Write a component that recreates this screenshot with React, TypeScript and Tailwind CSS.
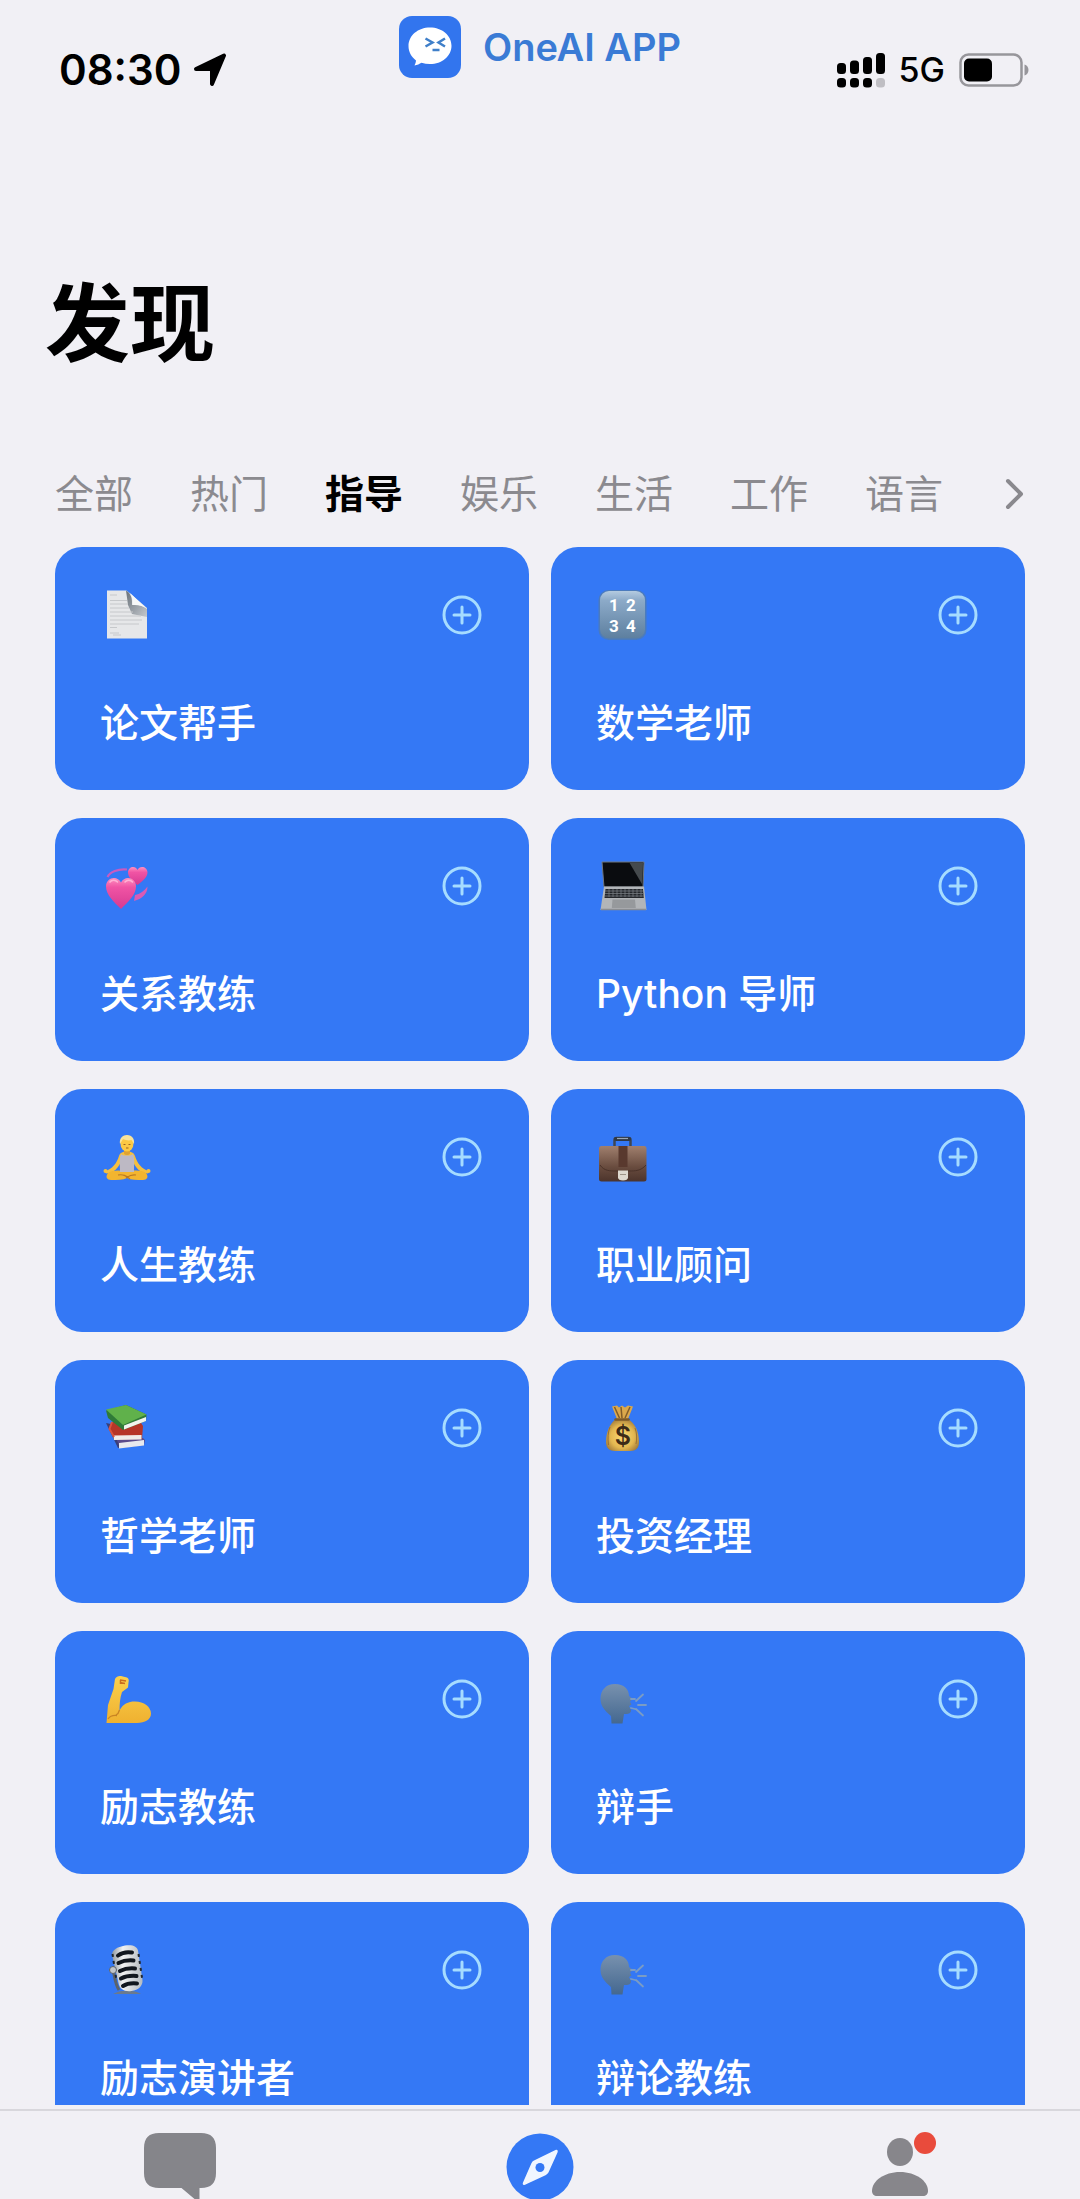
import type { ReactNode } from 'react';

interface Assistant {
    name: string;
    icon: ReactNode;
}

const categories = ['全部', '热门', '指导', '娱乐', '生活', '工作', '语言'];
const activeCategory = '指导';

const assistants: Assistant[] = [
    { name: '论文帮手', icon: <PageIcon /> },
    { name: '数学老师', icon: <NumbersIcon /> },
    { name: '关系教练', icon: <HeartsIcon /> },
    { name: 'Python 导师', icon: <LaptopIcon /> },
    { name: '人生教练', icon: <MeditationIcon /> },
    { name: '职业顾问', icon: <BriefcaseIcon /> },
    { name: '哲学老师', icon: <BooksIcon /> },
    { name: '投资经理', icon: <MoneyBagIcon /> },
    { name: '励志教练', icon: <BicepsIcon /> },
    { name: '辩手', icon: <SpeakingIcon id="debater" /> },
    { name: '励志演讲者', icon: <MicrophoneIcon /> },
    { name: '辩论教练', icon: <SpeakingIcon id="debateCoach" /> },
];

export default function App() {
    return (
        <div className="flex h-screen flex-col bg-[#f1f0f5] font-['Inter','Noto_Sans_CJK_SC',sans-serif] text-black">
            <StatusBar />

            <h1 className="mt-[175px] px-[45px] text-[85px] leading-[120px] font-bold">发现</h1>

            {/* Category tabs */}
            <nav className="mt-[81px] flex h-14 items-center justify-between pr-[56px] pl-[55px]">
                <div className="flex gap-[57px]">
                    {categories.map((category) => (
                        <button
                            key={category}
                            className={
                                category === activeCategory
                                    ? 'text-[39px] leading-14 font-bold text-black'
                                    : 'text-[39px] leading-14 font-normal text-[#8b8a8f]'
                            }
                        >
                            {category}
                        </button>
                    ))}
                </div>
                <button aria-label="更多分类">
                    <svg width="20" height="32" viewBox="0 0 20 32" fill="none" stroke="#8a898e" strokeWidth="4" strokeLinecap="round" strokeLinejoin="round">
                        <path d="M4 3 17 16 4 29" />
                    </svg>
                </button>
            </nav>

            {/* Assistant cards */}
            <main className="mt-[25px] mb-1 min-h-0 flex-1 overflow-y-auto px-[55px] [scrollbar-width:none]">
                <div className="grid grid-cols-2 gap-x-[22px] gap-y-7">
                    {assistants.map((assistant) => (
                        <AssistantCard key={assistant.name} assistant={assistant} />
                    ))}
                </div>
            </main>

            <TabBar />
        </div>
    );
}

function StatusBar() {
    return (
        <header className="grid grid-cols-[1fr_auto_1fr] px-[51px] pt-4">
            <div className="flex items-center gap-3 self-end pl-2">
                <span className="text-[42px] leading-10 font-semibold">08:30</span>
                <svg width="34" height="34" viewBox="0 0 34 34">
                    <path d="M31 2.500 19 31V16H3Z" fill="#000" stroke="#000" strokeWidth="4" strokeLinejoin="round" />
                </svg>
            </div>

            <div className="mb-3 flex items-center gap-[22px]">
                <svg width="62" height="62" viewBox="0 0 62 62">
                    <rect width="62" height="62" rx="13" fill="#3275ee" />
                    <path d="M31 11.500C19 11.500 9.500 19.500 9.500 30c0 6 3 11 7.500 14.500-.2 2-.8 3.500-1.500 5 2.800-.4 5-1.500 7-2.700 2.700.8 5.500 1.200 8.500 1.200 12 0 21.500-8 21.500-18.300S43 11.500 31 11.500Z" fill="#fff" />
                    <path d="m26.500 22.500 7 4-7 4M46 22.500l-6.500 4 6.500 4M33.500 34h7" fill="none" stroke="#3f7fc9" strokeWidth="2.500" />
                </svg>
                <span className="text-[38px] leading-none font-semibold text-[#3a7bd5]">OneAI APP</span>
            </div>

            <div className="flex items-center justify-end gap-[14px] self-end">
                <svg width="48" height="35" viewBox="0 0 48 35">
                    <rect x="0" y="10" width="9" height="11" rx="3.500" />
                    <rect x="13" y="7.500" width="9" height="13.500" rx="3.500" />
                    <rect x="26" y="4" width="9" height="17" rx="3.500" />
                    <rect x="39" y="0" width="9" height="21" rx="3.500" />
                    <rect x="0" y="25" width="9" height="9.500" rx="3.500" />
                    <rect x="13" y="25" width="9" height="9.500" rx="3.500" />
                    <rect x="26" y="25" width="9" height="9.500" rx="3.500" />
                    <rect x="39" y="25" width="9" height="9.500" rx="3.500" fill="#bfbec3" />
                </svg>
                <span className="text-[34px] leading-10 font-medium">5G</span>
                <svg width="70" height="34" viewBox="0 0 70 34">
                    <rect x="1.500" y="1.500" width="61" height="31" rx="8" fill="none" stroke="#97969b" strokeWidth="2.500" />
                    <rect x="5" y="5.500" width="28" height="23" rx="5" />
                    <path d="M65.500 11.500c2.500.5 4 3 4 5.500s-1.500 5-4 5.500Z" fill="#97969b" />
                </svg>
            </div>
        </header>
    );
}

function AssistantCard({ assistant }: { assistant: Assistant }) {
    return (
        <article className="flex h-[243px] flex-col justify-between rounded-[27px] bg-[#3478f5] pt-[42px] pr-[47px] pb-[39px] pl-[45px]">
            <div className="flex items-center justify-between">
                {assistant.icon}
                <button aria-label={`添加${assistant.name}`}>
                    <svg width="40" height="40" viewBox="0 0 40 40" fill="none" stroke="#a6dcff" strokeWidth="3" strokeLinecap="round">
                        <circle cx="20" cy="20" r="18" />
                        <path d="M20 12v16M12 20h16" />
                    </svg>
                </button>
            </div>
            <h2 className="text-[39px] leading-14 font-medium text-white">{assistant.name}</h2>
        </article>
    );
}

function TabBar() {
    return (
        <nav className="grid h-[90px] shrink-0 grid-cols-3 items-start justify-items-center overflow-hidden border-t-2 border-[#d8d7dc] pt-[22px]">
            <button aria-label="聊天">
                <svg width="72" height="72" viewBox="0 0 72 72" fill="#85858a">
                    <path d="M15 0h42c10 0 15 5 15 15v25c0 10-5 15-15 15h-1.500v12.500c0 1.500-1.200 1.800-2.200.8L37.500 55H15C5 55 0 50 0 40V15C0 5 5 0 15 0Z" />
                </svg>
            </button>
            <button aria-label="发现">
                <svg width="68" height="68" viewBox="0 0 68 68">
                    <circle cx="34" cy="34" r="33.500" fill="#3478f5" />
                    <path d="M49.500 17 28 27.500c-1.200.6-2 1.500-2.600 2.700L17 49.500c-.8 2 .3 3 2 2.200l20.500-9.500c1.500-.8 2.500-1.800 3.200-3.200l8.800-19.500c.8-2-.3-3.300-2-2.500Z" fill="#f0f6ff" />
                    <circle cx="34" cy="34.500" r="4.500" fill="#3478f5" />
                </svg>
            </button>
            <button aria-label="我的" className="relative">
                <svg width="56" height="64" viewBox="0 0 56 64" fill="#87868b">
                    <ellipse cx="28" cy="19" rx="13" ry="14" />
                    <path d="M0 58c0-10 12-19 28-19s28 9 28 19c0 3-2 5-5 5H5c-3 0-5-2-5-5Z" />
                </svg>
                <span className="absolute -top-px -right-2 size-[22px] rounded-full bg-[#e94b3c]" />
            </button>
        </nav>
    );
}

function Pictogram({ children }: { children: ReactNode }) {
    return (
        <svg width="52" height="52" viewBox="0 0 52 52" aria-hidden="true">
            {children}
        </svg>
    );
}

function PageIcon() {
    return (
        <Pictogram>
            <defs>
                <linearGradient id="pageFold" x1="0" y1="0" x2="1" y2="1">
                    <stop offset="0" stopColor="#3f4a55" />
                    <stop offset="1" stopColor="#b9bec4" />
                </linearGradient>
            </defs>
            <path d="M7 1.500h19.500L47 19v30.500H7Z" fill="#e6e7e9" />
            <path d="M26 1.500c5 3 6.500 8 6 14.500 5-.8 11 .5 15 4v8L32 25l-4-9Z" fill="url(#pageFold)" opacity=".75" />
            <path d="M28 2c4 3.500 5 8 4.500 14 5-.5 10 .5 14 3.500Z" fill="#f7f8f9" />
            <path d="M10 6h7M10 11.500h17M10 15h18M10 19h19M10 23h23M10 27h31M10 31h32M10 35h29M10 38.500h7M10 44h9M13 46h8" stroke="#c6c8cb" strokeWidth="1" />
        </Pictogram>
    );
}

function NumbersIcon() {
    return (
        <Pictogram>
            <defs>
                <linearGradient id="numbers" x1="0" y1="0" x2="0" y2="1">
                    <stop offset="0" stopColor="#b4cbe0" />
                    <stop offset=".2" stopColor="#8caac8" />
                    <stop offset="1" stopColor="#5d7f9f" />
                </linearGradient>
            </defs>
            <rect x="2.500" y="1" width="48" height="50" rx="10" fill="#4b7bbd" />
            <rect x="4" y="2" width="45" height="47.500" rx="9" fill="url(#numbers)" />
            <g className="font-['Roboto',sans-serif] text-[17px] font-bold" fill="#fff" textAnchor="middle">
                <text x="18" y="22">1</text>
                <text x="35" y="22">2</text>
                <text x="18" y="43">3</text>
                <text x="35" y="43">4</text>
            </g>
        </Pictogram>
    );
}

function HeartsIcon() {
    return (
        <Pictogram>
            <defs>
                <linearGradient id="heart" x1="0" y1="0" x2="0" y2="1">
                    <stop offset="0" stopColor="#ff8fc0" />
                    <stop offset=".3" stopColor="#f054a4" />
                    <stop offset="1" stopColor="#d63a92" />
                </linearGradient>
            </defs>
            <path d="M7.500 17C10 12 18 8.500 27 9.500" fill="none" stroke="#c85bc0" strokeWidth="2.200" />
            <path d="M35 35c5-1 9.500-4 12.500-8.500C47.500 34 42 39 34 41Z" fill="#d95bb4" />
            <path d="M37.500 25C33 21.500 28 17.500 28 12.500c0-6 7.500-7.500 9.500-2.500 2-5 10-3.500 10 2.500 0 5-5.500 9-10 12.500Z" fill="url(#heart)" />
            <path d="M21 49C14 42 6 35 6 26.500c0-9.500 11.500-11.500 15-4 3.500-7.500 15-5.500 15 4C36 35 28 42 21 49Z" fill="url(#heart)" />
            <path d="M10 22c1.500-2.500 5.500-2.500 7.500 0M25 22c2-2.500 5.500-2.500 7.500 0" fill="none" stroke="#ffb3d4" strokeWidth="1.500" strokeLinecap="round" />
        </Pictogram>
    );
}

function LaptopIcon() {
    return (
        <Pictogram>
            <path d="M6 2h42l-1 25H8Z" fill="#0a0c0f" stroke="#6f767e" strokeWidth="1" />
            <path d="M33.500 2.700H47l-.6 22Z" fill="#454a4d" />
            <path d="M8 26.500h40L50.500 50H4.500Z" fill="#b2b5b8" />
            <path d="M9.500 29h37.500l.8 9H8.500Z" fill="#24272b" />
            <path d="M9 31h38M9 33.500h38.500M9 36h39" stroke="#7d8287" strokeWidth=".7" />
            <path d="M13 29v8M17 29v8M21 29v8M25 29v8M29 29v8M33 29v8M37 29v8M41 29v8M45 29v8" stroke="#7d8287" strokeWidth=".7" />
            <path d="M16.500 39.500h22.500l.8 8.500h-24Z" fill="#96999c" />
            <path d="M5 49.500h45" stroke="#8a8d91" strokeWidth="1.500" />
        </Pictogram>
    );
}

function MeditationIcon() {
    return (
        <Pictogram>
            <path d="M5 40c7-1.500 12-8 14-15 1-3 3-4.500 8-4.500s7 1.500 8 4.500c2 7 7 13.500 14 15l-1 2.500c-8-1-12-5-14.500-11H20.500C18 37.500 14 41.500 6 42.500Z" fill="#f5bf3e" />
            <path d="M8 42c5-3 12-3 19-1 7-2 14-2 19 1 3 4 1 7-3 7-6 0-12 0-16-2-4 2-10 2-16 2-4 0-6-3-3-7Z" fill="#f3b52f" />
            <path d="M18 44c6-1 8 1 12 4M36 44c-5-1-7 1-10 3" fill="none" stroke="#b97924" strokeWidth="1.200" />
            <path d="M21 23c2 2 10 2 12 0 2 5 1 9 1 18H20c0-9-1-13 1-18Z" fill="#bdb9c4" />
            <path d="M24 17h6v5.500c-1.500 2-4.500 2-6 0Z" fill="#e0a231" />
            <ellipse cx="27" cy="12.500" rx="6.500" ry="8" fill="#fbc944" />
            <path d="M20 13C18 1 36 1 34 13l-2.500-4c-3 1-6 0-8.500-1Z" fill="#f8e39b" />
            <path d="M23.500 13.500h2M28.500 13.500h2M26 17h2.500" stroke="#9c6420" strokeWidth="1" />
            <circle cx="5.500" cy="40" r="2" fill="#f5bf3e" />
            <circle cx="48.500" cy="40" r="2" fill="#f5bf3e" />
        </Pictogram>
    );
}

function BriefcaseIcon() {
    return (
        <Pictogram>
            <defs>
                <linearGradient id="leather" x1="0" y1="0" x2="0" y2="1">
                    <stop offset="0" stopColor="#a0806e" />
                    <stop offset=".6" stopColor="#684b3e" />
                    <stop offset="1" stopColor="#4c342c" />
                </linearGradient>
            </defs>
            <path d="M18.500 15V9c0-1.500 1-2 2-2h12c1 0 2 .5 2 2v6" fill="none" stroke="#3d4654" strokeWidth="2.500" />
            <path d="M20 8h13" stroke="#2f3846" strokeWidth="4" strokeLinecap="round" />
            <path d="M21 7.500h11" stroke="#99a6b4" strokeWidth="1.200" />
            <rect x="3" y="15" width="47.500" height="35.500" rx="2.500" fill="url(#leather)" />
            <path d="M4 34c4 6 10 6 16 6h13c6 0 12 0 17-6" fill="none" stroke="#4a3229" strokeWidth="1" />
            <rect x="22.500" y="15" width="9" height="21" fill="#59392e" />
            <path d="M22 39.500h10v7c0 2-2 3-5 3s-5-1-5-3Z" fill="#ded9d0" />
            <path d="M24 43.500h6" stroke="#9e9589" strokeWidth="1" />
        </Pictogram>
    );
}

function BooksIcon() {
    return (
        <Pictogram>
            <path d="m6 21 12 25 26-3-28-20Z" fill="#3a3f78" />
            <path d="m15 33 28 3 2 2-1 5-24 3Z" fill="#5a4a8b" />
            <path d="m19 41 25-3v5.500l-25 3Z" fill="#e8e9ee" />
            <path d="m12 20 29 1 2 3-1 13-27.500.5L9.500 25Z" fill="#b63528" />
            <path d="m13.500 33.500 28-.5v4.500l-27.500.5Z" fill="#f0ece9" />
            <path d="M12 20 9.500 27l4.500 8" fill="none" stroke="#d95340" strokeWidth="2" />
            <path d="M6 8.500 26 3l20.500 9.500L46 19l-23 9L8 16Z" fill="#2f7a38" />
            <path d="M6 7.500 26 3l20.500 9.500L23 23Z" fill="#60b14b" />
            <path d="m24 23.500 22-8.500v4l-22 8.500Z" fill="#f2f4ee" />
        </Pictogram>
    );
}

function MoneyBagIcon() {
    return (
        <Pictogram>
            <defs>
                <radialGradient id="bag" cx=".5" cy=".55" r=".6">
                    <stop offset="0" stopColor="#fbd875" />
                    <stop offset=".6" stopColor="#e3b750" />
                    <stop offset="1" stopColor="#9b7438" />
                </radialGradient>
            </defs>
            <path d="m16 4.500 5-1 2 2 3-2 3 2 3-2 5 1-5 12.500H21Z" fill="#dba84b" />
            <path d="m18.500 5 5 11M25 5l1 11M34 5l-5 11" stroke="#805c2a" strokeWidth="1.500" />
            <path d="M20 17h12c7 4 11 13 11 23 0 6-3 9-9 9H19c-6 0-9-3-9-9 0-10 4-19 10-23Z" fill="url(#bag)" />
            <path d="M14 25c-2 5-2.500 11-1.500 18M39 26c2 5 2 11 1 16" stroke="#9c7132" strokeWidth="1" fill="none" />
            <path d="M19.500 17.500h13" stroke="#7c592a" strokeWidth="2.500" strokeLinecap="round" />
            <text x="27" y="43" textAnchor="middle" fill="#3c2a17" className="font-['Inter',sans-serif] text-[25px] font-semibold">$</text>
        </Pictogram>
    );
}

function BicepsIcon() {
    return (
        <Pictogram>
            <defs>
                <linearGradient id="arm" x1="0" y1="0" x2="0" y2="1">
                    <stop offset="0" stopColor="#fbd14d" />
                    <stop offset="1" stopColor="#efb130" />
                </linearGradient>
            </defs>
            <path d="M15 6c1-2.500 4-3.500 6-3l6 1.500c2 1 2 3 1.500 5l-.5 5-6 4.500c-2 6-2.500 12-2.500 18.500C23 31 28 28.500 35 28.500c9 0 16 5.500 16 12 0 6-6 9.500-14 9.500H6.500L8 32l5.500-16Z" fill="url(#arm)" />
            <path d="M19.500 37c-.5 2-1.500 4-3.500 5M8 46c2-3 5-4 9-3.500" fill="none" stroke="#c98423" strokeWidth="1.300" />
            <path d="m20 7 6 1M20 9.500l5 1M20.500 7v4" fill="none" stroke="#ca6b1f" strokeWidth="1.500" />
        </Pictogram>
    );
}

function SpeakingIcon({ id }: { id: string }) {
    return (
        <Pictogram>
            <defs>
                <linearGradient id={id} x1="0" y1="0" x2="0" y2="1">
                    <stop offset="0" stopColor="#7891ae" />
                    <stop offset="1" stopColor="#446890" />
                </linearGradient>
            </defs>
            <path d="M19 11c9 0 14 5 14 12l4 3-3 2.500 1.500 3L33 33l2 4c0 3-2 4-5 4h-2l-1.500 9.500H15.500L15 43C9 38 4.500 33 4.500 26 4.500 17 10 11 19 11Z" fill={`url(#${id})`} />
            <path d="m40 28 7-6.500M42 32h8M40 36l7 6.500M35 26h4M35 35l4 1" stroke="#7b9cc4" strokeWidth="1.800" strokeLinecap="round" />
        </Pictogram>
    );
}

function MicrophoneIcon() {
    return (
        <Pictogram>
            <defs>
                <linearGradient id="chrome" x1="0" y1="0" x2="1" y2="0">
                    <stop offset="0" stopColor="#8f989f" />
                    <stop offset=".35" stopColor="#f1f2f2" />
                    <stop offset="1" stopColor="#b5bbc0" />
                </linearGradient>
            </defs>
            <path d="M13 50c4-2 7-3 9-3h9c4 0 8 1.500 10 3Z" fill="#6a7a8e" />
            <path d="M13 26c2 7 2 14 6 20" fill="none" stroke="#5b636b" strokeWidth="3" />
            <path d="M12 11c0-5 5-8 13-9.500 8-1 12 1 13 5L42.500 36c.5 6-4 10-11 11-7 1-12-2-13-8Z" fill="url(#chrome)" />
            <path d="M18 11.500c4-3 8-4 14-3M18.500 19c5-2.500 9-3 15-2.500M20 27c5-2.500 9-3 15-2.500M21 34.500c5-2.500 9-3 15.500-2.500M23 42c4-2.500 9-3 14-2.500" fill="none" stroke="#11171e" strokeWidth="4" strokeLinecap="round" />
            <path d="m12.500 10 4 27M38.500 10l4 27" stroke="#20272e" strokeWidth="2" strokeDasharray="3 4" />
            <circle cx="13" cy="26" r="3.500" fill="#c2c6ca" stroke="#59616a" strokeWidth="1" />
        </Pictogram>
    );
}
